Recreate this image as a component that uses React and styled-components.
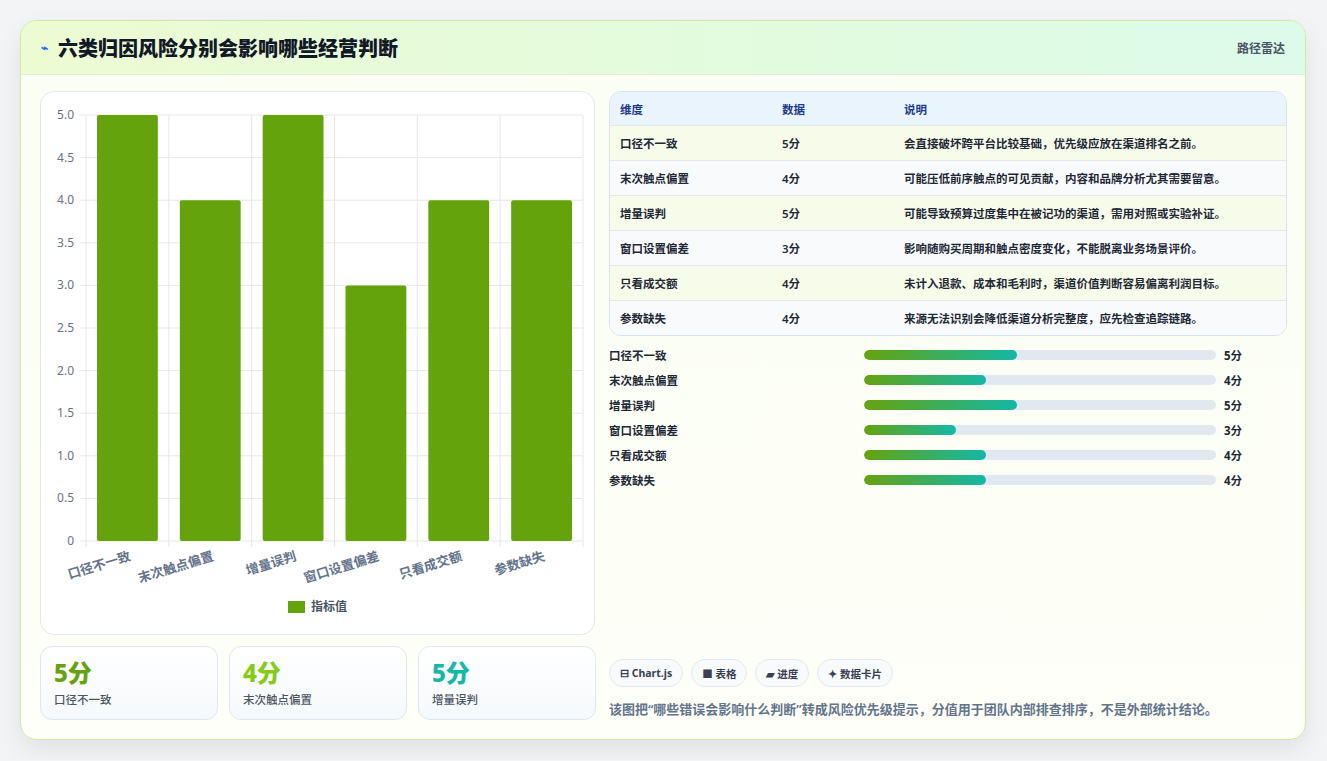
import React from "react";
import styled, { createGlobalStyle } from "styled-components";

const G = createGlobalStyle`
  html,body{margin:0;background:#f3f4f6;}
  body{font-family:"Noto Sans","Noto Sans CJK SC",sans-serif;color:#1f2937;}
`;
const Page = styled.div`padding:20px 21px 20px 20px;`;
const Card = styled.div`
  width:1286px;height:720px;box-sizing:border-box;border:1px solid #cfe8a3;border-radius:16px;
  background:linear-gradient(180deg,#fbfef3,#fdfff8);box-shadow:0 10px 24px rgba(0,0,0,.08);
  overflow:hidden;display:flex;flex-direction:column;
`;
const Header = styled.div`
  height:55px;box-sizing:border-box;border-bottom:1px solid #e3ecd8;
  background:linear-gradient(90deg,#ecfbd2,#e2fbdf 60%,#dcfbea);
  display:flex;align-items:center;justify-content:space-between;padding:0 20px;
`;
const Title = styled.div`display:flex;align-items:center;gap:10px;font-size:20px;font-weight:800;color:#111827;`;
const Tag = styled.div`font-size:12px;font-weight:600;color:#4b5563;`;
const Body = styled.div`display:grid;grid-template-columns:555px 678px;gap:14px;padding:16px 19px 19px 19px;flex:1;`;
const Col = styled.div`display:flex;flex-direction:column;gap:11px;`;
const ChartCard = styled.div`height:544px;box-sizing:border-box;border:1px solid #e2e8f0;border-radius:14px;background:#fff;`;
const Stats = styled.div`display:grid;grid-template-columns:178px 178px 178px;gap:11px;`;
const Stat = styled.div`height:74px;box-sizing:border-box;border:1px solid #dde7f0;border-radius:12px;background:linear-gradient(180deg,#fff,#f6f9fc);padding:10px 13px;`;
const StatV = styled.div`font-size:24px;font-weight:800;color:${p=>p.c};line-height:32px;`;
const StatL = styled.div`font-size:11.5px;font-weight:500;color:#4b5563;margin-top:2px;`;
const Table = styled.div`border:1px solid #d8e1ec;border-radius:12px;overflow:hidden;background:#fff;`;
const Row = styled.div`display:grid;grid-template-columns:162px 122px 1fr;height:34px;align-items:center;padding-left:10px;
  font-size:11.5px;font-weight:600;color:#1f2937;border-top:${p=>p.h?"none":"1px solid #e3e8ef"};
  background:${p=>p.h?"#eaf4fd":p.odd?"#f7fbea":"#f8fafc"};${p=>p.h?"font-weight:700;color:#1e3a8a;height:33px;":""}`;
const Bars = styled.div`display:flex;flex-direction:column;margin-top:-2px;`;
const BarRow = styled.div`display:grid;grid-template-columns:255px 352px 1fr;gap:0;align-items:center;height:25px;font-size:11.5px;font-weight:600;`;
const Track = styled.div`height:10px;border-radius:5px;background:#e2e8f0;overflow:hidden;`;
const Fill = styled.div`height:100%;border-radius:5px;background:linear-gradient(90deg,#65a30d,#14b8a6);`;
const Val = styled.div`font-weight:700;padding-left:8px;font-size:11.5px;`;
const Spacer = styled.div`flex:1;`;
const Chips = styled.div`display:flex;gap:8px;`;
const Chip = styled.div`height:28px;box-sizing:border-box;padding:0 10px;border:1px solid #e2e8f0;border-radius:14px;background:#f8fafc;
  font-size:10.5px;font-weight:700;color:#374151;display:flex;align-items:center;gap:3px;`;
const Note = styled.div`font-size:13px;color:#64748b;margin-top:12px;margin-bottom:2px;font-weight:600;`;

const data=[["口径不一致",5,"会直接破坏跨平台比较基础，优先级应放在渠道排名之前。"],["末次触点偏置",4,"可能压低前序触点的可见贡献，内容和品牌分析尤其需要留意。"],["增量误判",5,"可能导致预算过度集中在被记功的渠道，需用对照或实验补证。"],["窗口设置偏差",3,"影响随购买周期和触点密度变化，不能脱离业务场景评价。"],["只看成交额",4,"未计入退款、成本和毛利时，渠道价值判断容易偏离利润目标。"],["参数缺失",4,"来源无法识别会降低渠道分析完整度，应先检查追踪链路。"]];

function Chart(){
  const x0=45,x1=542,y0=449,yt=23,h=y0-yt,cw=(x1-x0)/6;
  const ticks=[];for(let i=0;i<=10;i++)ticks.push(i*0.5);
  return <svg width="555" height="544" style={{display:"block"}} fontFamily="Noto Sans, Noto Sans CJK SC, sans-serif">
    {ticks.map(t=>{const y=y0-t/5*h;return <g key={t}><line x1={x0-6} x2={x1} y1={y} y2={y} stroke="#e5e7eb"/>
      <text x={x0-12} y={y+4} fontSize="12" fill="#6b7280" textAnchor="end">{t===0?"0":t.toFixed(1)}</text></g>})}
    {[0,1,2,3,4,5,6].map(i=><line key={i} x1={x0+i*cw} x2={x0+i*cw} y1={yt} y2={y0+6} stroke="#e5e7eb"/>)}
    {data.map((d,i)=>{const bh=d[1]/5*h;return <g key={i}>
      <rect x={x0+i*cw+11} y={y0-bh} width={cw-22} height={bh} rx="2" fill="#65a30d"/>
      <text transform={`translate(${x0+i*cw+cw*0.55},${y0+19}) rotate(-17)`} textAnchor="end" fontSize="13" fontWeight="700" fill="#64748b">{d[0]}</text></g>})}
    <rect x="247" y="509" width="17" height="12" fill="#65a30d"/>
    <text x="270" y="519" fontSize="12" fontWeight="600" fill="#4b5563">指标值</text>
  </svg>;
}

export default function App(){
  return <><G/><Page><Card>
    <Header><Title><span style={{fontSize:12,color:"#2563eb"}}>⌁</span>六类归因风险分别会影响哪些经营判断</Title><Tag>路径雷达</Tag></Header>
    <Body>
      <Col>
        <ChartCard><Chart/></ChartCard>
        <Stats>
          <Stat><StatV c="#65a30d">5分</StatV><StatL>口径不一致</StatL></Stat>
          <Stat><StatV c="#84cc16">4分</StatV><StatL>末次触点偏置</StatL></Stat>
          <Stat><StatV c="#14b8a6">5分</StatV><StatL>增量误判</StatL></Stat>
        </Stats>
      </Col>
      <Col style={{gap:8}}>
        <Table>
          <Row h><span>维度</span><span>数据</span><span>说明</span></Row>
          {data.map((d,i)=><Row key={i} odd={i%2===0}><span>{d[0]}</span><span>{d[1]}分</span><span>{d[2]}</span></Row>)}
        </Table>
        <Bars>{data.map((d,i)=><BarRow key={i}><span>{d[0]}</span><Track><Fill style={{width:`${d[1]*8.7}%`}}/></Track><Val>{d[1]}分</Val></BarRow>)}</Bars>
        <Spacer/>
        <div>
          <Chips><Chip>⊟ Chart.js</Chip><Chip>■ 表格</Chip><Chip>▰ 进度</Chip><Chip>✦ 数据卡片</Chip></Chips>
          <Note>该图把“哪些错误会影响什么判断”转成风险优先级提示，分值用于团队内部排查排序，不是外部统计结论。</Note>
        </div>
      </Col>
    </Body>
  </Card></Page></>;
}
